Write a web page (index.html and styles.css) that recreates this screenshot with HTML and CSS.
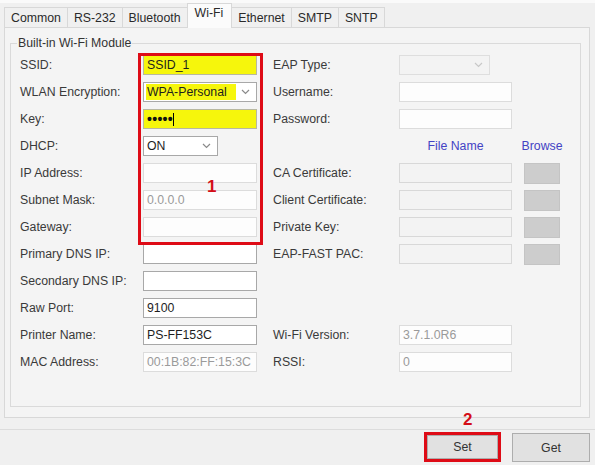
FILE: index.html
```html
<!DOCTYPE html>
<html>
<head>
<meta charset="utf-8">
<link rel="stylesheet" href="styles.css">
</head>
<body>
<div class="topstrip"></div>
<div class="tabs">
  <div class="tab">Common</div>
  <div class="tab">RS-232</div>
  <div class="tab">Bluetooth</div>
  <div class="tab active">Wi-Fi</div>
  <div class="tab">Ethernet</div>
  <div class="tab">SMTP</div>
  <div class="tab">SNTP</div>
</div>
<div class="panel">
  <fieldset class="group">
    <legend>Built-in Wi-Fi Module</legend>
    <div class="grid">
      <div class="lbl">SSID:</div>
      <div class="field hl">SSID_1</div>
      <div class="lbl r">EAP Type:</div>
      <div class="field sel disabled narrow"><span></span><svg width="9" height="6" viewBox="0 0 9 6"><path d="M1 1 L4.5 4.5 L8 1" fill="none" stroke="#c8c8c8" stroke-width="1.2"/></svg></div>
      <div></div>

      <div class="lbl">WLAN Encryption:</div>
      <div class="field sel"><span class="mark">WPA-Personal</span><svg width="9" height="6" viewBox="0 0 9 6"><path d="M1 1 L4.5 4.5 L8 1" fill="none" stroke="#8a8a8a" stroke-width="1.2"/></svg></div>
      <div class="lbl r">Username:</div>
      <div class="field light"></div>
      <div></div>

      <div class="lbl">Key:</div>
      <div class="field hl"><span class="dots">•••••</span><span class="caret"></span></div>
      <div class="lbl r">Password:</div>
      <div class="field light"></div>
      <div></div>

      <div class="lbl">DHCP:</div>
      <div class="cell"><div class="field sel dhcp"><span>ON</span><svg width="9" height="6" viewBox="0 0 9 6"><path d="M1 1 L4.5 4.5 L8 1" fill="none" stroke="#8a8a8a" stroke-width="1.2"/></svg></div></div>
      <div></div>
      <div class="head">File Name</div>
      <div class="head browse-head"><span>Browse</span></div>

      <div class="lbl">IP Address:</div>
      <div class="field light"></div>
      <div class="lbl r">CA Certificate:</div>
      <div class="field off"></div>
      <div class="bcell"><div class="bbtn"></div></div>

      <div class="lbl">Subnet Mask:</div>
      <div class="field light gray">0.0.0.0</div>
      <div class="lbl r">Client Certificate:</div>
      <div class="field off"></div>
      <div class="bcell"><div class="bbtn"></div></div>

      <div class="lbl">Gateway:</div>
      <div class="field light"></div>
      <div class="lbl r">Private Key:</div>
      <div class="field off"></div>
      <div class="bcell"><div class="bbtn"></div></div>

      <div class="lbl">Primary DNS IP:</div>
      <div class="field"></div>
      <div class="lbl r">EAP-FAST PAC:</div>
      <div class="field off"></div>
      <div class="bcell"><div class="bbtn"></div></div>

      <div class="lbl">Secondary DNS IP:</div>
      <div class="field"></div>
      <div></div><div></div><div></div>

      <div class="lbl">Raw Port:</div>
      <div class="field">9100</div>
      <div></div><div></div><div></div>

      <div class="lbl">Printer Name:</div>
      <div class="field">PS-FF153C</div>
      <div class="lbl r">Wi-Fi Version:</div>
      <div class="field light gray">3.7.1.0R6</div>
      <div></div>

      <div class="lbl">MAC Address:</div>
      <div class="field light gray">00:1B:82:FF:15:3C</div>
      <div class="lbl r">RSSI:</div>
      <div class="field light gray">0</div>
      <div></div>
    </div>
  </fieldset>
</div>
<div class="footer">
  <div class="setframe"><button class="btn">Set</button></div>
  <button class="btn get">Get</button>
</div>
<div class="redbox"></div>
<div class="num one">1</div>
<div class="num two">2</div>
</body>
</html>
```
FILE: styles.css
```css
* { box-sizing: border-box; }
body {
  margin: 0;
  width: 595px;
  height: 465px;
  background: #f0f0f0;
  font-family: "Liberation Sans", Arial, sans-serif;
  font-size: 12.3px;
  color: #3a3a3a;
  position: relative;
  overflow: hidden;
}
.topstrip { height: 3px; background: #fafafa; }
.tabs {
  display: flex;
  align-items: flex-end;
  height: 24px;
  padding-left: 4px;
}
.tab {
  height: 20px;
  line-height: 20px;
  padding: 0 6px;
  border: 1px solid #d8d8d8;
  border-bottom: none;
  margin-right: -1px;
  background: #f0f0f0;
  color: #2a2a2a;
}
.tab.active {
  height: 25px;
  line-height: 19px;
  margin-bottom: -1px;
  background: #fbfbfb;
  position: relative;
  z-index: 1;
  padding: 0 8px 0 7px;
}
.panel {
  margin-left: 4px;
  margin-right: 5px;
  height: 391px;
  border: 1px solid #d8d8d8;
  background: #f4f4f4;
  padding: 8px 8px 0 5px;
}
.group {
  margin: 0;
  border: 1px solid #dadada;
  padding: 5px 10px 0 9px;
  height: 371px;
}
.group legend {
  padding: 0 1px;
  margin-left: -3px;
  line-height: 14px;
  color: #333;
}
.grid {
  display: grid;
  grid-template-columns: 123px 114px 142px 113px 48px;
  grid-auto-rows: 20px;
  row-gap: 7px;
}
.lbl { line-height: 20px; white-space: nowrap; }
.lbl.r { padding-left: 16px; }
.field {
  height: 20px;
  border: 1px solid #a8a8a8;
  background: #ffffff;
  line-height: 18px;
  padding-left: 3px;
  color: #1e1e1e;
  white-space: nowrap;
  overflow: hidden;
}
.field.hl { background: #f6f60c; border-color: #b8b8a0; }
.field.light { border-color: #dcdcdc; background: #fdfdfd; }
.field.gray { color: #9a9a9a; }
.field.off { border-color: #d8d8d8; background: #f3f3f3; }
.field.sel {
  display: flex;
  align-items: center;
  justify-content: space-between;
  padding-right: 6px;
  padding-left: 2px;
}
.field.sel .mark {
  background: #f6f60c;
  line-height: 16px;
  padding: 0 9px 0 1px;
}
.field.disabled { background: #f3f3f3; border-color: #dedede; width: 91px; }
.field.dhcp { width: 75px; padding-left: 3px; }
.cell { height: 20px; }
.dots {
  font-size: 14px;
  font-weight: bold;
  letter-spacing: 0.3px;
  color: #111;
  line-height: 18px;
}
.caret {
  display: inline-block;
  width: 1px;
  height: 13px;
  background: #000;
  vertical-align: -2px;
}
.head {
  line-height: 20px;
  color: #4343c4;
  text-align: center;
  white-space: nowrap;
}
.browse-head {
  display: flex;
  justify-content: center;
  padding-left: 12px;
}
.bcell { padding-left: 12px; }
.bbtn {
  width: 36px;
  height: 21px;
  background: #cdcdcd;
  border: 1px solid #c4c4c4;
}
.footer {
  margin-top: 11px;
  border-top: 1px solid #dcdcdc;
  display: flex;
  justify-content: flex-end;
  align-items: flex-start;
  padding-top: 2px;
  padding-right: 5px;
  gap: 11px;
}
.setframe {
  border: 3px solid #de0b16;
  width: 77px;
  height: 30px;
  padding: 0;
}
.btn {
  font-family: "Liberation Sans", Arial, sans-serif;
  font-size: 12.3px;
  color: #333;
  background: #e1e1e1;
  border: 1px solid #adadad;
  width: 71px;
  height: 24px;
  padding: 0;
  margin: 0;
}
.btn.get { width: 78px; height: 29px; margin-top: 1px; }
.redbox {
  position: absolute;
  left: 138px;
  top: 53px;
  width: 125px;
  height: 192px;
  border: 3px solid #de0b16;
}
.num {
  position: absolute;
  color: #d40d18;
  font-weight: bold;
  font-size: 17px;
  line-height: 18px;
}
.num.one { left: 207px; top: 178px; }
.num.two { left: 463px; top: 411px; }
```
